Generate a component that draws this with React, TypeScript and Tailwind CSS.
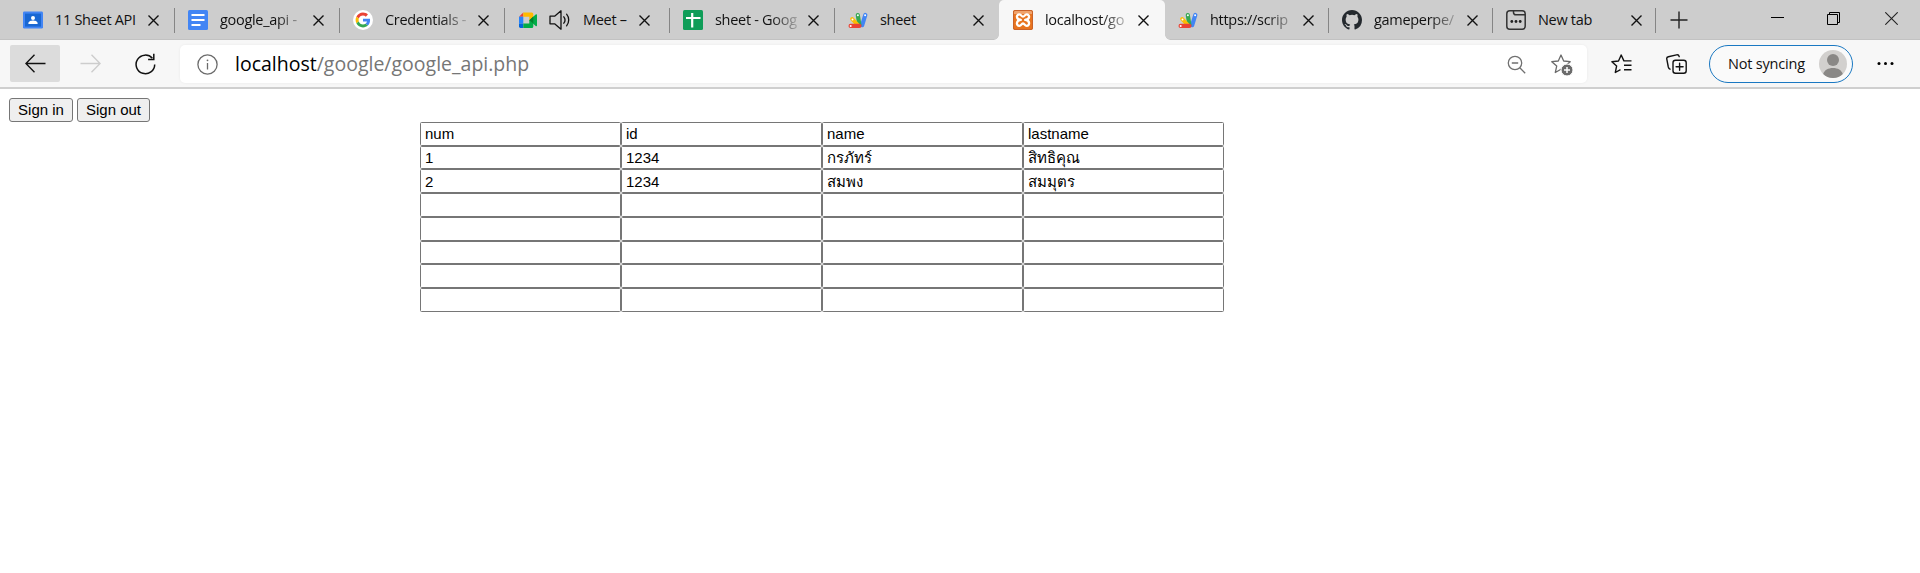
import React from "react";

type IconProps = { className?: string };

const ClassroomIcon = () => (
  <svg width="20" height="20" viewBox="0 0 20 20">
    <rect y="1.6" width="20" height="17" rx="1.4" fill="#4285f4" />
    <rect x="2" y="3.6" width="16" height="13" fill="#1967d2" />
    <circle cx="10" cy="8" r="2" fill="#fff" />
    <path d="M5.4 14v-1c0-1.7 3-2.5 4.6-2.5s4.6.8 4.6 2.5v1z" fill="#fff" />
  </svg>
);

const DocsIcon = () => (
  <svg width="20" height="20" viewBox="0 0 20 20">
    <rect width="20" height="20" rx="1.5" fill="#4285f4" />
    <path d="M3.5 5h13M3.5 10h13M3.5 15h9" stroke="#fff" strokeWidth="2" />
  </svg>
);

const GoogleIcon = () => (
  <svg width="20" height="20" viewBox="0 0 20 20">
    <circle cx="10" cy="10" r="10" fill="#fff" />
    <g transform="translate(2.6 2.6) scale(.308)">
      <path fill="#EA4335" d="M24 9.5c3.54 0 6.71 1.22 9.21 3.6l6.85-6.85C35.9 2.38 30.47 0 24 0 14.62 0 6.51 5.38 2.56 13.22l7.98 6.19C12.43 13.72 17.74 9.5 24 9.5z" />
      <path fill="#4285F4" d="M46.98 24.55c0-1.57-.15-3.09-.38-4.55H24v9.02h12.94c-.58 2.96-2.26 5.48-4.78 7.18l7.73 6c4.51-4.18 7.09-10.36 7.09-17.65z" />
      <path fill="#FBBC05" d="M10.53 28.59A14.5 14.5 0 0 1 9.77 24c0-1.6.27-3.14.76-4.59l-7.98-6.19A23.9 23.9 0 0 0 0 24c0 3.88.92 7.54 2.56 10.78z" />
      <path fill="#34A853" d="M24 48c6.48 0 11.93-2.13 15.89-5.81l-7.73-6c-2.15 1.45-4.92 2.3-8.16 2.3-6.26 0-11.57-4.22-13.47-9.91l-7.98 6.19C6.51 42.62 14.62 48 24 48z" />
    </g>
  </svg>
);

const MeetIcon = () => (
  <svg width="20" height="20" viewBox="0 0 20 20">
    <path d="M5.3 2.4 1 6.8h4.3z" fill="#ea4335" />
    <path d="M1 6.7h4.3v6.8H1z" fill="#2684fc" />
    <path d="M1 13.4h4.3V18H2.4A1.4 1.4 0 0 1 1 16.6z" fill="#0066da" />
    <path d="M5.3 2.4h8.5a1.5 1.5 0 0 1 1.5 1.5V8l-4 2.8V6.8h-6z" fill="#ffba00" />
    <path d="M5.3 13.4h6V9.9l4 3v3.6a1.5 1.5 0 0 1-1.5 1.5H5.3z" fill="#00ac47" />
    <path d="m11.3 10.2 6.4-5.8c.6-.5 1.3-.2 1.3.5v10.6c0 .7-.7 1-1.3.5z" fill="#00ac47" />
    <path d="m11.3 10.2 4-3.7v7z" fill="#00832d" />
  </svg>
);

const SpeakerIcon = () => (
  <svg width="22" height="20" viewBox="0 0 22 20" fill="none" stroke="#111" strokeWidth="1.3" strokeLinecap="round" strokeLinejoin="round">
    <path d="M1 6.2h4.6L12 .8v18.4l-6.4-5.4H1z" />
    <path d="M14.8 6.8c1.4 1.8 1.4 4.6 0 6.4M17.6 4.2c2.8 3.3 2.8 8.3 0 11.6" />
  </svg>
);

const SheetsIcon = () => (
  <svg width="20" height="20" viewBox="0 0 20 20">
    <rect width="20" height="20" rx="1.5" fill="#0f9d58" />
    <path d="M3 8h14.5M9.2 3v14.5" stroke="#fff" strokeWidth="2.2" />
  </svg>
);

const ScriptIcon = () => (
  <svg width="20" height="20" viewBox="0 0 20 20" strokeLinecap="round">
    <path d="M14.2 15.2 17.3 5" stroke="#4285f4" strokeWidth="4.2" />
    <path d="M11.4 15 9.8 5" stroke="#34a853" strokeWidth="4.2" />
    <path d="M9.8 15 4.2 9" stroke="#fbbc04" strokeWidth="4" />
    <path d="M2.6 15.9h8.8" stroke="#ea4335" strokeWidth="4.2" />
    <g fill="#fff">
      <circle cx="17.1" cy="5.3" r="1" />
      <circle cx="9.9" cy="5.2" r="1" />
      <circle cx="4.5" cy="9.5" r="1" />
      <circle cx="2.7" cy="15.9" r="1" />
    </g>
  </svg>
);

const XamppIcon = () => (
  <svg width="20" height="20" viewBox="0 0 20 20">
    <rect width="20" height="20" rx="2" fill="#e8741f" />
    <path d="M1 1h18v3H1z" fill="#f0a36c" />
    <rect x=".5" y=".5" width="19" height="19" rx="1.6" fill="none" stroke="#c9622a" />
    <g fill="none" stroke="#fff" strokeWidth="2.3" strokeLinecap="round" strokeLinejoin="round">
      <path d="M7.6 9.9C2.6 9.300 3.200 4.400 6.300 4.400c2.200 0 1.900 2.200 3.700 2.200s1.500-2.200 3.700-2.200c3.100 0 3.700 4.900-1.300 5.500" />
      <path d="M7.600 9.900c-5 .6-4.400 5.900-1.300 5.900 2.200 0 1.900-2.300 3.700-2.300s1.500 2.300 3.700 2.300c3.100 0 3.700-5.300-1.300-5.900" />
    </g>
  </svg>
);

const GithubIcon = () => (
  <svg width="20" height="20" viewBox="0 0 16 16" fill="#24292e">
    <path d="M8 0C3.580 0 0 3.580 0 8c0 3.540 2.290 6.530 5.470 7.590.4.070.550-.170.550-.380 0-.190-.010-.820-.010-1.490-2.010.370-2.530-.490-2.690-.940-.090-.230-.480-.940-.820-1.130-.280-.150-.680-.520-.010-.530.630-.010 1.080.580 1.230.820.720 1.210 1.870.870 2.330.660.070-.520.280-.870.510-1.070-1.780-.2-3.640-.890-3.640-3.950 0-.870.310-1.590.820-2.150-.080-.2-.360-1.020.080-2.120 0 0 .670-.210 2.200.820a7.600 7.600 0 0 1 4 0c1.530-1.040 2.200-.820 2.200-.820.440 1.100.160 1.920.080 2.120.510.560.820 1.270.820 2.150 0 3.070-1.870 3.750-3.650 3.950.290.250.540.730.540 1.480 0 1.070-.010 1.930-.010 2.200 0 .210.150.460.550.380A8.010 8.010 0 0 0 16 8c0-4.420-3.580-8-8-8z" />
  </svg>
);

const NewTabIcon = () => (
  <svg width="20" height="20" viewBox="0 0 20 20" fill="none" stroke="#333" strokeWidth="1.5">
    <rect x=".8" y=".8" width="18.400" height="18.400" rx="3" />
    <path d="M7.500 1v1.600a2.200 2.200 0 0 0 2.200 2.200H19" />
    <g fill="#222" stroke="none">
      <circle cx="5.800" cy="11.500" r="1.400" />
      <circle cx="10" cy="11.500" r="1.400" />
      <circle cx="14.200" cy="11.500" r="1.400" />
    </g>
  </svg>
);

const CloseIcon = ({ className = "" }: IconProps) => (
  <svg className={className} width="11" height="11" viewBox="0 0 11 11" stroke="#111" strokeWidth="1.400">
    <path d="m.5.5 10 10M10.500.5l-10 10" />
  </svg>
);

type Tab = {
  title: string;
  icon: React.ReactNode;
  width: string;
  active?: boolean;
  audio?: boolean;
  divider?: boolean;
  fade?: boolean;
};

const tabs: Tab[] = [
  { title: "11 Sheet API", icon: <ClassroomIcon />, width: "w-[166px]", divider: true },
  { title: "google_api -", icon: <DocsIcon />, width: "w-[165px]", divider: true, fade: true },
  { title: "Credentials -", icon: <GoogleIcon />, width: "w-[165px]", divider: true, fade: true },
  { title: "Meet –", icon: <MeetIcon />, width: "w-[165px]", audio: true, divider: true },
  { title: "sheet - Goog", icon: <SheetsIcon />, width: "w-[165px]", divider: true, fade: true },
  { title: "sheet", icon: <ScriptIcon />, width: "w-[164px]" },
  { title: "localhost/go", icon: <XamppIcon />, width: "w-[166px]", active: true, fade: true },
  { title: "https://scrip", icon: <ScriptIcon />, width: "w-[164px]", divider: true, fade: true },
  { title: "gameperpe/", icon: <GithubIcon />, width: "w-[164px]", divider: true, fade: true },
  { title: "New tab", icon: <NewTabIcon />, width: "w-[163px]", divider: true },
];

const BrowserTab = ({ tab, first }: { tab: Tab; first: boolean }) => (
  <div
    className={`relative flex h-10 shrink-0 items-center ${first ? "pl-3.5" : "pl-[13px]"} ${tab.width} ${
      tab.active ? "rounded-t-[5px] bg-[#f7f7f7] pl-[14px]" : ""
    }`}
  >
    {tab.active && (
      <>
        <span className="absolute -left-[5px] bottom-0 size-[5px] bg-[radial-gradient(circle_at_top_left,#cdcdcd_4.500px,#f7f7f7_5px)]" />
        <span className="absolute -right-[5px] bottom-0 size-[5px] bg-[radial-gradient(circle_at_top_right,#cdcdcd_4.500px,#f7f7f7_5px)]" />
      </>
    )}
    {tab.icon}
    {tab.audio && (
      <span className="ml-[11px]">
        <SpeakerIcon />
      </span>
    )}
    <span
      className={`whitespace-nowrap text-[14.5px] leading-5 tracking-[-0.3px] text-[#111] ${
        tab.fade ? "[mask-image:linear-gradient(to_right,black_calc(100%-28px),rgba(0,0,0,0.15))]" : ""
      } ${tab.audio ? "ml-3 w-[50px]" : "ml-[12px] w-[84px]"}`}
    >
      {tab.title}
    </span>
    <CloseIcon className={tab.audio ? "ml-[6px] mt-px" : "ml-[9px] mt-px"} />
    {tab.divider && <span className="absolute right-0 top-2 h-[25px] w-px bg-[#858585]" />}
  </div>
);

const rows: string[][] = [
  ["num", "id", "name", "lastname"],
  ["1", "1234", "กรภัทร์", "สิทธิคุณ"],
  ["2", "1234", "สมพง", "สมมุตร"],
  ["", "", "", ""],
  ["", "", "", ""],
  ["", "", "", ""],
  ["", "", "", ""],
  ["", "", "", ""],
];

const rowHeights = ["h-6", "h-[23px]", "h-6", "h-6", "h-6", "h-[23px]", "h-6", "h-6"];
const lineHeights = ["leading-[22px]", "leading-[22px]", "leading-[23px]"];

const starPath =
  "m10 1 2.700 6 6.500.7-4.900 4.400 1.400 6.400L10 15.200l-5.700 3.300 1.400-6.400L.8 7.700 7.300 7z";

export default function App() {
  return (
    <div className="h-[573px] w-[1920px] overflow-hidden bg-white font-['Open_Sans','Noto_Sans',sans-serif]">
      <header>
        <div className="flex h-10 bg-[#cdcdcd] pl-[9px] shadow-[inset_0_-1px_0_#c2c2c2]">
          {tabs.map((tab, i) => (
            <BrowserTab key={i} tab={tab} first={i === 0} />
          ))}
          <div className="flex flex-1 items-center pl-[14px]">
            <svg width="18" height="18" viewBox="0 0 18 18" stroke="#222" strokeWidth="1.400">
              <path d="M9 .5v17M.5 9h17" />
            </svg>
            <div className="mb-1 ml-auto mr-[22px] flex items-center">
              <svg width="13" height="13" viewBox="0 0 13 13" stroke="#000" strokeWidth="1">
                <path d="M0 5.500h13" />
              </svg>
              <svg className="ml-[43px]" width="13" height="13" viewBox="0 0 13 13" stroke="#000" fill="none">
                <path d="M.5 2.500h10v10H.5zM2.500 2.500v-2h10v10h-2" />
              </svg>
              <svg className="ml-[45px]" width="13" height="13" viewBox="0 0 13 13" stroke="#222" strokeWidth="1.100">
                <path d="m.3.3 12.400 12.400M12.700.3.3 12.700" />
              </svg>
            </div>
          </div>
        </div>

        <div className="flex h-[49px] items-start border-b-2 border-[#cfcfcf] bg-[#f7f7f7] pl-[10px] pt-[5px]">
          <div className="flex h-[37px] w-[50px] items-center justify-center rounded-[2px] bg-[#dcdcdc]">
            <svg width="21" height="19" viewBox="0 0 21 19" fill="none" stroke="#111" strokeWidth="1.400">
              <path d="M20.500 9.500H1M9.500.8.9 9.500l8.600 8.700" />
            </svg>
          </div>
          <div className="ml-[5px] flex h-[37px] w-[50px] items-center justify-center">
            <svg width="21" height="19" viewBox="0 0 21 19" fill="none" stroke="#cdcdcd" strokeWidth="1.400">
              <path d="M.5 9.500H20M11.500.8l8.600 8.700-8.600 8.700" />
            </svg>
          </div>
          <div className="ml-[5px] flex h-[37px] w-[50px] items-center justify-center">
            <svg width="21" height="22" viewBox="0 0 21 22" fill="none" stroke="#111" strokeWidth="1.500">
              <path d="M19.700 11.500A9.300 9.300 0 1 1 17.400 5.300" />
              <path d="M18.800.8v5.700h-5.700" />
            </svg>
          </div>
          <div className="ml-[10px] flex h-[38px] w-[1407px] items-center rounded-[5px] bg-white pl-[17px] shadow-[0_0_3px_rgba(0,0,0,0.06)]">
            <svg width="21" height="21" viewBox="0 0 21 21" fill="none" stroke="#6b6b6b" strokeWidth="1.300">
              <circle cx="10.500" cy="10.500" r="9.600" />
              <path d="M10.500 9v6.500" />
              <circle cx="10.500" cy="6.300" r=".9" fill="#6b6b6b" stroke="none" />
            </svg>
            <span className="ml-[17px] text-[19.500px] leading-7 text-[#767676]">
              <span className="text-black">localhost</span>/google/google_api.php
            </span>
            <svg className="ml-auto" width="19" height="19" viewBox="0 0 19 19" fill="none" stroke="#707070" strokeWidth="1.300">
              <circle cx="8" cy="8" r="6.700" />
              <path d="M4.800 8h6.400M12.800 12.800l5.400 5.400" />
            </svg>
            <svg className="ml-[25px] mr-[14px] mt-[2px]" width="22" height="22" viewBox="0 0 22 22" fill="none" stroke="#6b6b6b" strokeWidth="1.300" strokeLinejoin="round">
              <path d={starPath} />
              <circle cx="16" cy="16" r="6" fill="#6b6b6b" stroke="#fff" strokeWidth="1" />
              <path d="M16 13v6M13 16h6" stroke="#fff" strokeWidth="1.500" />
            </svg>
          </div>
          <div className="flex h-[38px] items-center">
            <svg className="ml-[24px]" width="21" height="20" viewBox="0 0 21 20" fill="none" stroke="#111" strokeWidth="1.400" strokeLinejoin="round">
              <path d="M20.500 6.900h-7.600L10.200 1 7.500 7 .9 7.700l4.700 4.400-1.300 6.400 5.200-2.900M13 11.300h7.500M13 15.700h7.500" />
            </svg>
            <svg className="ml-[34px]" width="21" height="20" viewBox="0 0 21 20" fill="none" stroke="#111" strokeWidth="1.400" strokeLinecap="round">
              <rect x="7" y="6.200" width="13.200" height="13" rx="2.500" />
              <path d="M13.600 9.200v7M10.100 12.700h7M4 15.200C3 14.800 2.600 14 2.300 13L.8 5.200c-.3-1.300.3-2.200 1.600-2.500L10.500.9c1.400-.3 2.400.4 2.700 1.700" />
            </svg>
          </div>
          <div className="ml-[22px] flex h-[38px] w-[144px] items-center justify-between rounded-full border-[1.500px] border-[#1a78c2] bg-[#fafafa] pl-[18px] pr-[5px] text-[14.500px] tracking-[-0.200px] text-[#111]">
            Not syncing
            <svg width="28" height="28" viewBox="0 0 28 28">
              <circle cx="14" cy="14" r="14" fill="#d2d0ce" />
              <circle cx="14" cy="10" r="6" fill="#8a8886" />
              <path d="M4.200 24c1.200-4 5-6 9.800-6s8.600 2 9.800 6a14 14 0 0 1-19.600 0z" fill="#8a8886" />
            </svg>
          </div>
          <svg className="ml-[24px] mt-[16px]" width="17" height="5" viewBox="0 0 17 5">
            <circle cx="2" cy="2.500" r="1.500" />
            <circle cx="8.500" cy="2.500" r="1.500" />
            <circle cx="15" cy="2.500" r="1.500" />
          </svg>
        </div>
      </header>

      <main className="pt-[9px] font-['Liberation_Sans','Noto_Sans',sans-serif] text-[15px] text-black">
        <div className="flex gap-1 pl-[9px]">
          <button className="h-6 w-16 rounded-[3px] border border-[#767676] bg-[#efefef] leading-[22px]">Sign in</button>
          <button className="h-6 w-[73px] rounded-[3px] border border-[#767676] bg-[#efefef] leading-[22px]">Sign out</button>
        </div>
        <div className="ml-[420px] w-[804px]">
          {rows.map((row, r) => (
            <div key={r} className="flex">
              {row.map((value, c) => (
                <div
                  key={c}
                  className={`w-[201px] rounded-[1.500px] border border-[#767676] pl-[4px] ${rowHeights[r]} ${lineHeights[r] ?? ""}`}
                >
                  {value}
                </div>
              ))}
            </div>
          ))}
        </div>
      </main>
    </div>
  );
}
